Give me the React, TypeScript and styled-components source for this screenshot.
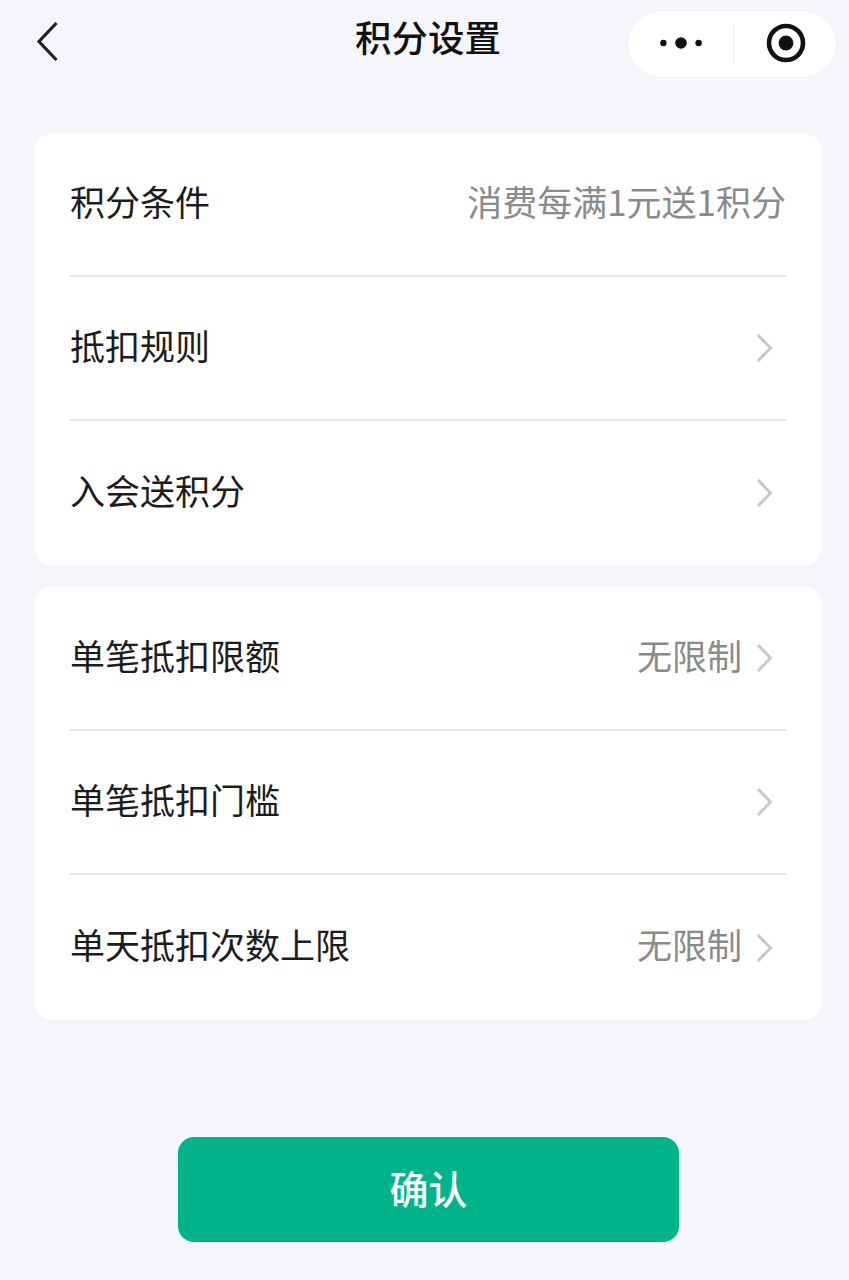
import React from "react";
import styled, { createGlobalStyle } from "styled-components";

const Global = createGlobalStyle`
  html, body { margin: 0; padding: 0; background: #f4f6fb; }
  body { font-family: "Noto Sans CJK SC", "Liberation Sans", sans-serif; }
`;

const Page = styled.div`
  width: 849px;
  height: 1280px;
  overflow: hidden;
  background: #f4f6fb;
  display: flex;
  flex-direction: column;
`;

const NavBar = styled.header`
  position: relative;
  height: 80px;
  margin-bottom: 54px;
  padding-left: 7px;
  display: flex;
  align-items: center;
  justify-content: center;
`;

const BackButton = styled.svg`
  position: absolute;
  left: 34px;
  top: 20px;
  width: 28px;
  height: 42px;
`;

const Title = styled.h1`
  margin: 0 0 7px;
  font-size: 36.5px;
  line-height: 50px;
  font-weight: 500;
  color: #111;
`;

const Capsule = styled.div`
  position: absolute;
  left: 627px;
  top: 10px;
  width: 210px;
  height: 68px;
  box-sizing: border-box;
  border-radius: 34px;
  background: #fff;
  border: 1px solid #eff0f4;
  display: grid;
  grid-template-columns: 105px 1px 1fr;
  align-items: center;
`;

const CapsuleSlot = styled.div<{ $shift: number }>`
  height: 100%;
  padding-left: ${(p) => p.$shift}px;
  padding-bottom: 2px;
  box-sizing: border-box;
  display: flex;
  align-items: center;
  justify-content: center;
`;

const CapsuleDivider = styled.div`
  height: 40px;
  background: #eeeeee;
`;

const Cards = styled.main`
  display: flex;
  flex-direction: column;
  gap: 22px;
  padding: 0 28px 0 35px;
`;

const Card = styled.section`
  background: #fff;
  border-radius: 16px;
  padding: 0 35px;
`;

const Row = styled.div<{ $height: number }>`
  height: ${(p) => p.$height}px;
  box-sizing: border-box;
  display: flex;
  align-items: center;
  justify-content: space-between;
  border-bottom: 2px solid #e6e6e8;
  &:last-child { border-bottom: none; }
`;

const Label = styled.span`
  font-size: 35px;
  line-height: 48px;
  margin-bottom: 7px;
  color: #1c1c1c;
`;

const Right = styled.div`
  display: flex;
  align-items: center;
`;

const Value = styled.span<{ $flush?: boolean }>`
  font-size: 35px;
  line-height: 48px;
  margin-bottom: 7px;
  color: #8a8a8a;
  margin-right: ${(p) => (p.$flush ? 0 : 12)}px;
`;

const Chevron = styled.svg`
  width: 22px;
  height: 34px;
  margin-right: 10px;
`;

const Footer = styled.footer`
  display: flex;
  justify-content: center;
  padding: 117px 0 0 8px;
`;

const ConfirmButton = styled.button`
  width: 501px;
  height: 105px;
  padding: 0 0 6px;
  border: none;
  border-radius: 16px;
  background: #00b38a;
  color: #fff;
  font-family: inherit;
  font-size: 39px;
  font-weight: 500;
  letter-spacing: 0;
`;

const Arrow = () => (
  <Chevron viewBox="0 0 22 34" fill="none" stroke="#c8c8c8" strokeWidth="3">
    <path d="M4 4l12.5 13L4 30" />
  </Chevron>
);

type RowData = { label: string; value?: string; arrow?: boolean; h: number };

const cardA: RowData[] = [
  { label: "积分条件", value: "消费每满1元送1积分", h: 143 },
  { label: "抵扣规则", arrow: true, h: 144 },
  { label: "入会送积分", arrow: true, h: 144 },
];

const cardB: RowData[] = [
  { label: "单笔抵扣限额", value: "无限制", arrow: true, h: 144 },
  { label: "单笔抵扣门槛", arrow: true, h: 144 },
  { label: "单天抵扣次数上限", value: "无限制", arrow: true, h: 145 },
];

const renderRows = (rows: RowData[]) =>
  rows.map((r) => (
    <Row key={r.label} $height={r.h}>
      <Label>{r.label}</Label>
      <Right>
        {r.value && <Value $flush={!r.arrow}>{r.value}</Value>}
        {r.arrow && <Arrow />}
      </Right>
    </Row>
  ));

export default function App() {
  return (
    <Page>
      <Global />
      <NavBar>
        <BackButton viewBox="0 0 28 42" fill="none" stroke="#222" strokeWidth="3.2">
          <path d="M22.5 3L5 21.5 22.5 40" />
        </BackButton>
        <Title>积分设置</Title>
        <Capsule>
          <CapsuleSlot $shift={0}>
            <svg width="42" height="16" viewBox="0 0 42 16" fill="#111">
              <circle cx="3.4" cy="8" r="3.2" />
              <circle cx="21" cy="8" r="5.8" />
              <circle cx="38.6" cy="8" r="3.2" />
            </svg>
          </CapsuleSlot>
          <CapsuleDivider />
          <CapsuleSlot $shift={2}>
            <svg width="40" height="40" viewBox="0 0 40 40">
              <circle cx="20" cy="20" r="17" fill="none" stroke="#111" strokeWidth="4.6" />
              <circle cx="20" cy="20" r="7.4" fill="#111" />
            </svg>
          </CapsuleSlot>
        </Capsule>
      </NavBar>
      <Cards>
        <Card>{renderRows(cardA)}</Card>
        <Card>{renderRows(cardB)}</Card>
      </Cards>
      <Footer>
        <ConfirmButton>确认</ConfirmButton>
      </Footer>
    </Page>
  );
}
